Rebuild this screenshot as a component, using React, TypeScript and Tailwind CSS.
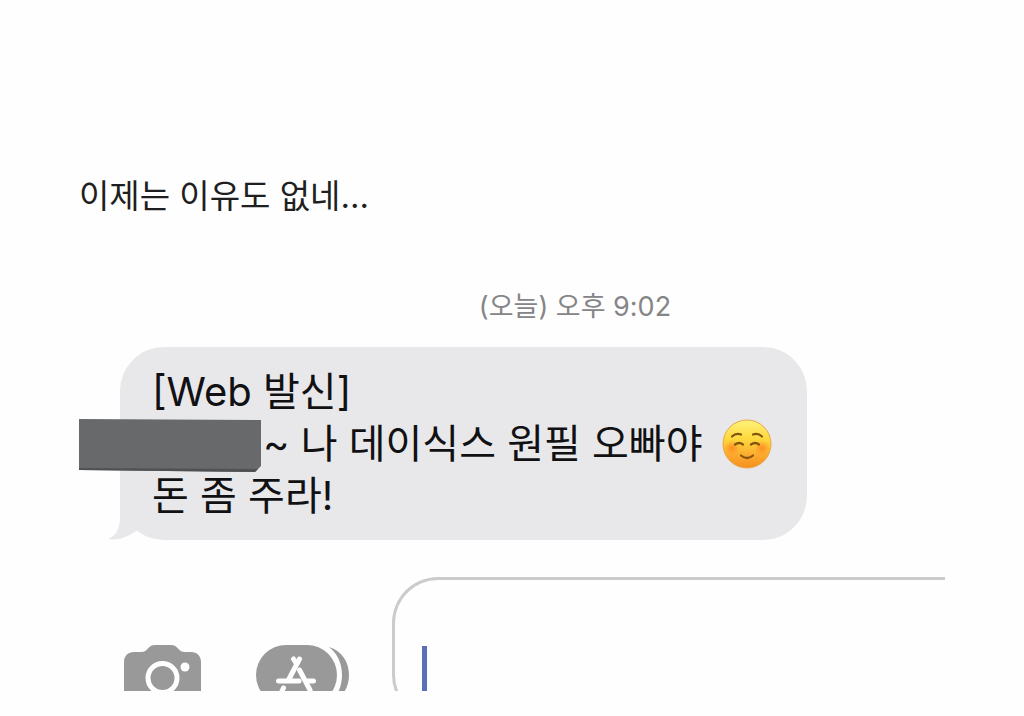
function SmileEmoji() {
  return (
    <svg role="img" aria-label="☺️" viewBox="0 0 50 50" className="h-[50px] w-[50px] shrink-0">
      <defs>
        <linearGradient id="face" x1="0" y1="0" x2="0" y2="1">
          <stop offset="0" stopColor="#fff27c" />
          <stop offset="0.4" stopColor="#fdd83c" />
          <stop offset="0.75" stopColor="#fba82c" />
          <stop offset="1" stopColor="#f58f20" />
        </linearGradient>
        <radialGradient id="cheek">
          <stop offset="0" stopColor="#ff7a1f" stopOpacity="0.75" />
          <stop offset="1" stopColor="#ff8a20" stopOpacity="0" />
        </radialGradient>
      </defs>
      <circle cx="25" cy="25" r="24" fill="url(#face)" stroke="#e9a545" strokeWidth="1" />
      <circle cx="10" cy="29" r="8" fill="url(#cheek)" />
      <circle cx="40" cy="29" r="8" fill="url(#cheek)" />
      <g fill="none" stroke="#85550f" strokeWidth="2.200" strokeLinecap="round">
        <path d="M10 17.500Q14 13.500 19 15.500" />
        <path d="M31 15.500Q36 13.500 40 17.500" />
        <path d="M13 25.500Q17 22.500 21 25.500" />
        <path d="M29 25.500Q33 22.500 37 25.500" />
        <path d="M19 36.500Q25 41.500 31 36.500" />
      </g>
    </svg>
  );
}

function CameraIcon() {
  return (
    <svg viewBox="0 0 78 66" className="h-[66px] w-[78px]" aria-hidden="true">
      <path
        fill="#999999"
        d="M10 7H17C20 7 22 6 24 3.500C26 1 28 0 31 0H47C50 0 52 1 54 3.500C56 6 58 7 61 7H67C73 7 77 11 77 17V56C77 62 73 66 67 66H10C4 66 0 62 0 56V17C0 11 4 7 10 7Z"
      />
      <circle cx="38.500" cy="33" r="14.500" fill="none" stroke="#fff" strokeWidth="5" />
      <circle cx="61" cy="22" r="4.500" fill="#fff" />
    </svg>
  );
}

function AppsIcon() {
  return (
    <svg viewBox="0 0 93 60" className="h-[60px] w-[93px]" aria-hidden="true">
      <path fill="#999999" d="M73 2C86 6 93 17 93 30S86 54 73 58C82 51 86 41 86 30S82 9 73 2Z" />
      <rect width="81" height="60" rx="30" fill="#999999" />
      <g stroke="#fff" strokeWidth="5" strokeLinecap="round" fill="none">
        <path d="M43.500 14L33 34" />
        <path d="M37.500 14L40 18M43.500 25L54 45" />
        <path d="M22.500 36H43M51 36H57.500" />
        <path d="M27.500 43L26 46" />
      </g>
    </svg>
  );
}

export default function App() {
  return (
    <main className="bg-[#fefefe] px-[79px] pt-[172px] pb-[25px] font-['Inter','Noto_Sans_CJK_KR',sans-serif]">
      <h1 className="text-[33px] leading-[48px] font-normal text-[#1f1f21]">이제는 이유도 없네...</h1>

      <section className="pt-[71px]">
        <p className="pl-[126px] text-center text-[27px] leading-[32px] text-[#858588]">
          <time>(오늘) 오후 9:02</time>
        </p>

        <div className="relative mt-[24px] mr-[138px] ml-[41px] rounded-[44px] bg-[#e8e8eb] px-[32px] pt-[19px] pb-[18px] text-[40px] leading-[52px] whitespace-nowrap text-[#111113]">
          <svg viewBox="0 0 44 50" className="absolute bottom-0 -left-[12px] h-[50px] w-[44px]" aria-hidden="true">
            <path fill="#e8e8eb" d="M12 0V28C12 38 8 46 0 49C10 51 20 47 28 41L44 30V0Z" />
          </svg>
          <p className="relative">[Web 발신]</p>
          <p className="relative -ml-[73px] flex h-[52px] items-center">
            <svg viewBox="0 0 184 56" className="h-[56px] w-[184px] shrink-0" aria-hidden="true">
              <path fill="#67696b" d="M0 3L182 4V50L176 56L0 54Z" />
              <path fill="#505154" d="M0 52L179 53L176 56L0 54Z" />
            </svg>
            <span>~ 나 데이식스 원필 오빠야</span>
            <span className="ml-5 flex">
              <SmileEmoji />
            </span>
          </p>
          <p className="relative">돈 좀 주라!</p>
        </div>
      </section>

      <form className="mt-[37px] flex h-[114px] items-start overflow-hidden" onSubmit={(e) => e.preventDefault()}>
        <div className="flex shrink-0 items-start gap-[54px] pt-[68px] pl-[45px]">
          <button type="button" aria-label="카메라">
            <CameraIcon />
          </button>
          <button type="button" aria-label="앱">
            <AppsIcon />
          </button>
        </div>
        <div className="ml-[43px] flex h-[144px] flex-1 items-start rounded-l-[46px] border-[3px] border-r-0 border-[#cbcbcb] pt-[66px] pl-[27px]">
          <span className="h-[60px] w-[5px] shrink-0 bg-[#5a6fb8]" />
          <input aria-label="메시지" className="h-[60px] min-w-0 flex-1 bg-transparent px-2 text-[40px] outline-none" />
        </div>
      </form>
    </main>
  );
}
